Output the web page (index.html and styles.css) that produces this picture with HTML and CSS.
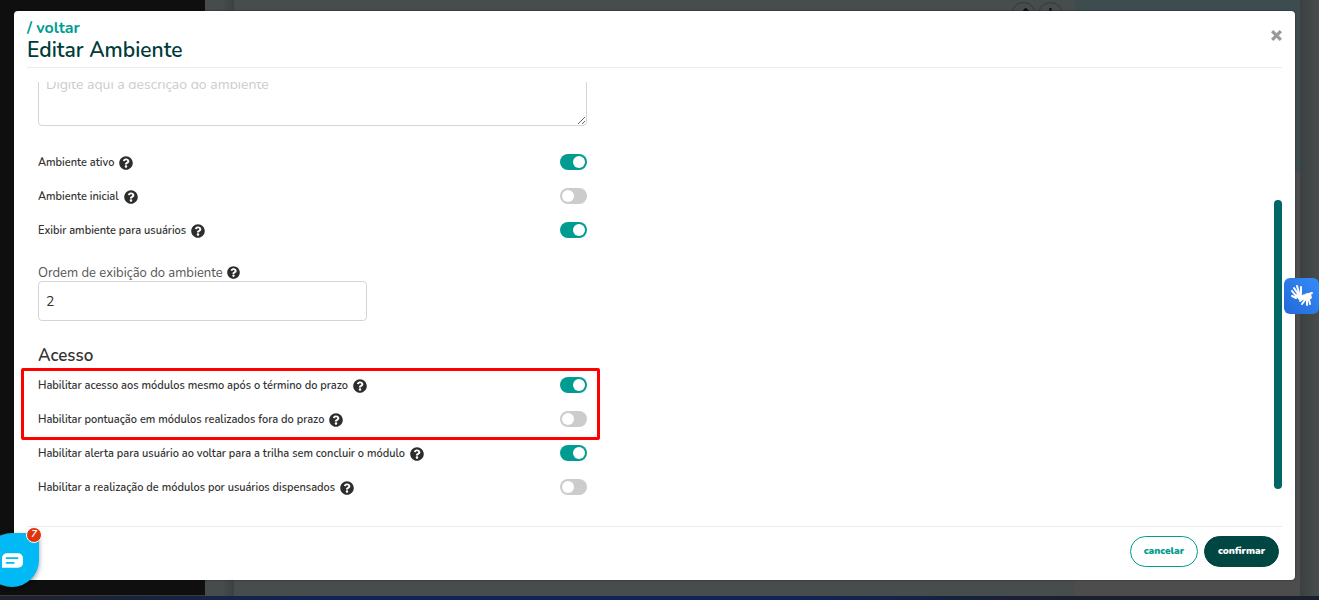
FILE: index.html
```html
<!DOCTYPE html>
<html lang="pt-BR">
<head>
    <meta charset="UTF-8">
    <meta name="viewport" content="width=device-width, initial-scale=1.0">
    <title>Editar Ambiente</title>
    <link rel="stylesheet" href="styles.css">
</head>
<body>
    <svg class="sprite" aria-hidden="true">
        <symbol id="help" viewBox="0 0 512 512">
            <path d="M504 256c0 137-111 248-248 248S8 393 8 256 119 8 256 8s248 111 248 248zM262.700 90c-54.500 0-89.300 23-116.500 63.800-3.500 5.300-2.400 12.400 2.700 16.300l34.700 26.300c5.200 3.900 12.600 3 16.700-2.100 17.900-22.700 30.100-35.800 57.300-35.800 20.400 0 45.700 13.100 45.700 33 0 15-12.400 22.700-32.500 34C247.100 238.500 216 254.900 216 296v4c0 6.600 5.400 12 12 12h56c6.600 0 12-5.400 12-12v-1.300c0-28.500 83.200-29.600 83.200-106.700 0-58-60.200-102-116.500-102zM256 338c-25.400 0-46 20.600-46 46s20.600 46 46 46 46-20.600 46-46-20.600-46-46-46z"/>
        </symbol>
    </svg>

    <div class="page">
        <div class="sidebar"></div>
        <div class="gutter"></div>
        <div class="content">
            <div class="tools">
                <span class="tool">
                    <svg viewBox="0 0 12 12"><path d="M2 10l1-3 5-6 2 2-5 6z"/></svg>
                </span>
                <span class="tool">
                    <svg viewBox="0 0 12 12"><path d="M6 0v10M2 6h8"/></svg>
                </span>
            </div>
        </div>
        <div class="panel"></div>
        <div class="edge"></div>
    </div>
    <div class="taskbar"></div>

    <div class="modal" role="dialog" aria-labelledby="title">
        <div class="modal-header">
            <div>
                <a class="back" href="#">/ voltar</a>
                <h1 id="title">Editar Ambiente</h1>
            </div>
            <button class="close" type="button" aria-label="Fechar">
                <svg viewBox="0 0 12 12"><path d="M2 2l8 8M10 2l-8 8"/></svg>
            </button>
        </div>

        <div class="modal-body">
            <form class="form" id="form">
                <textarea class="description" aria-label="Descrição" placeholder="Digite aqui a descrição do ambiente"></textarea>

                <div class="switches">
                    <div class="row">
                        <label for="ativo">Ambiente ativo</label>
                        <svg class="help"><use href="#help"/></svg>
                        <input class="switch" id="ativo" type="checkbox" checked>
                    </div>
                    <div class="row">
                        <label for="inicial">Ambiente inicial</label>
                        <svg class="help"><use href="#help"/></svg>
                        <input class="switch" id="inicial" type="checkbox">
                    </div>
                    <div class="row">
                        <label for="exibir">Exibir ambiente para usuários</label>
                        <svg class="help"><use href="#help"/></svg>
                        <input class="switch" id="exibir" type="checkbox" checked>
                    </div>
                </div>

                <div class="field">
                    <div class="field-label">
                        <label for="ordem">Ordem de exibição do ambiente</label>
                        <svg class="help small"><use href="#help"/></svg>
                    </div>
                    <input class="order" id="ordem" type="text" value="2">
                </div>

                <h2>Acesso</h2>
                <div class="highlight">
                    <div class="row">
                        <label for="prazo">Habilitar acesso aos módulos mesmo após o término do prazo</label>
                        <svg class="help"><use href="#help"/></svg>
                        <input class="switch" id="prazo" type="checkbox" checked>
                    </div>
                    <div class="row">
                        <label for="pontuacao">Habilitar pontuação em módulos realizados fora do prazo</label>
                        <svg class="help"><use href="#help"/></svg>
                        <input class="switch" id="pontuacao" type="checkbox">
                    </div>
                </div>
                <div class="row">
                    <label for="alerta">Habilitar alerta para usuário ao voltar para a trilha sem concluir o módulo</label>
                    <svg class="help"><use href="#help"/></svg>
                    <input class="switch" id="alerta" type="checkbox" checked>
                </div>
                <div class="row">
                    <label for="dispensados">Habilitar a realização de módulos por usuários dispensados</label>
                    <svg class="help"><use href="#help"/></svg>
                    <input class="switch" id="dispensados" type="checkbox">
                </div>
            </form>
            <div class="scrollbar"><div class="thumb"></div></div>
        </div>

        <div class="modal-footer">
            <button class="btn cancel" type="button">cancelar</button>
            <button class="btn confirm" type="submit" form="form">confirmar</button>
        </div>
    </div>

    <button class="chat" type="button" aria-label="Chat">
        <svg viewBox="0 0 22 16">
            <path class="bubble" d="M5 0h12a5 5 0 0 1 5 5v5a5 5 0 0 1-5 5H0V5a5 5 0 0 1 5-5z"/>
            <path class="lines" d="M4 5h13M4 10h9"/>
        </svg>
        <span class="badge">7</span>
    </button>

    <button class="libras" type="button" aria-label="Libras">
        <svg viewBox="0 0 24 24">
            <path class="finger" d="M6 12L2 7M8 10L4 4M9 9L7 2M11 9V3M6 14l-4-2"/>
            <path class="palm" d="M5 11l6-3 1 3 2-1-3 4 1 3-3-1z"/>
            <path class="palm" d="M13 11l4-2 4 1 1 4-4 3-4-1-2-2z"/>
            <path class="finger" d="M13 15l-3 2M15 16l-3 4M17 17v4M19 16l1 4M19 10l3-1M14 12l-3 2"/>
        </svg>
    </button>
</body>
</html>
```
FILE: styles.css
```css
* {
    box-sizing: border-box;
}
body {
    margin: 0;
    height: 100vh;
    display: flex;
    flex-direction: column;
    overflow: hidden;
    font-family: Nunito, Lato, sans-serif;
    font-size: 11px;
    color: #333;
    background: #101010;
}
button, input, textarea {
    font-family: inherit;
}
.sprite {
    display: none;
}
.page {
    flex: 1;
    display: flex;
}
.sidebar {
    width: 205px;
    background: #0f0f0f;
    border-bottom: 1px solid #3a3a3a;
}
.gutter {
    width: 29px;
    background: linear-gradient(90deg, #464b4b 60%, #3b4040);
}
.content {
    flex: 1;
    background: #474c4c;
}
.tools {
    display: flex;
    justify-content: flex-end;
    gap: 2px;
    padding: 2px 12px;
}
.tool {
    width: 25px;
    height: 25px;
    padding: 5px;
    border: 1px solid #343838;
    border-radius: 50%;
}
.tool svg {
    display: block;
    fill: none;
    stroke: #111;
    stroke-width: 2;
}
.panel {
    width: 225px;
    background: linear-gradient(#3c4c4f 172px, #4d4d4d 172px);
}
.edge {
    width: 19px;
    background: linear-gradient(90deg, #3b4040, #474c4c);
}
.taskbar {
    height: 4px;
    background: linear-gradient(90deg, #20222b, #102458 25%, #102458 60%, #1b2030 80%);
}

.modal {
    position: absolute;
    inset: 11px 24px 20px 14px;
    display: flex;
    flex-direction: column;
    padding: 0 13px;
    background: #fff;
    border-radius: 4px;
    box-shadow: 0 0 2px rgba(0,0,0,0.5);
}
.modal-header {
    display: flex;
    justify-content: space-between;
    align-items: flex-start;
    height: 57px;
    padding-top: 7px;
    border-bottom: 1px solid #ebebeb;
}
.back {
    display: block;
    font-size: 16px;
    line-height: 20px;
    font-weight: bold;
    color: #009c92;
    text-decoration: none;
}
h1 {
    margin: 0;
    font-size: 21px;
    line-height: 24px;
    font-weight: 600;
    color: #003b39;
}
.close {
    margin-top: 11px;
    padding: 0;
    border: none;
    background: none;
}
.close svg {
    display: block;
    width: 13px;
    height: 13px;
    margin-right: -1px;
    stroke: #999;
    stroke-width: 3;
}
.modal-body {
    flex: 1;
    min-height: 0;
    display: flex;
    justify-content: space-between;
    margin: 14px 0 0 -8px;
    padding-left: 8px;
    overflow: hidden;
}
.form {
    flex: 0 0 45%;
    padding: 0 5px 0 11px;
    margin-top: -16px;
}
.description {
    display: block;
    width: 100%;
    height: 60px;
    padding: 8px 7px;
    font-size: 14px;
    line-height: 20px;
    border: 1px solid #d5d5d5;
    border-radius: 4px;
}
.description::placeholder {
    color: #ccc;
}
.switches {
    margin-top: 19px;
}
.row {
    display: flex;
    align-items: center;
    height: 34px;
    gap: 5px;
    font-weight: 600;
}
.help {
    width: 14px;
    height: 14px;
    margin-top: 2px;
    fill: #2d2d2d;
}
.help.small {
    width: 13px;
    height: 13px;
    margin: 0;
}
.switch {
    appearance: none;
    width: 27px;
    height: 16px;
    margin: 0 0 0 auto;
    padding: 2px;
    border-radius: 8px;
    background: #ccc;
}
.switch::before {
    content: "";
    display: block;
    width: 12px;
    height: 12px;
    border-radius: 50%;
    background: #fff;
}
.switch:checked {
    background: #009c92;
}
.switch:checked::before {
    margin-left: auto;
}
.field {
    margin-top: 17px;
}
.field-label {
    display: flex;
    align-items: center;
    gap: 4px;
    height: 17px;
    font-size: 13px;
    color: #555;
}
.order {
    display: block;
    width: 60%;
    height: 40px;
    padding: 0 7px;
    font-size: 14px;
    color: #333;
    border: 1px solid #d5d5d5;
    border-radius: 4px;
}
h2 {
    margin: 24px 0 2px;
    font-size: 17px;
    line-height: 21px;
    font-weight: 600;
}
.highlight {
    position: relative;
}
.highlight::after {
    content: "";
    position: absolute;
    inset: 0 -13px -4px -17px;
    border: 3px solid #f00;
    border-radius: 2px;
    pointer-events: none;
}
.scrollbar {
    width: 8px;
    padding-top: 118px;
}
.thumb {
    height: 289px;
    border-radius: 4px;
    background: #006666;
}
.modal-footer {
    display: flex;
    justify-content: flex-end;
    gap: 6px;
    height: 54px;
    padding: 9px 3px 0;
    border-top: 1px solid #ebebeb;
}
.btn {
    height: 31px;
    padding: 0 13px 2px;
    font-size: 10px;
    font-weight: 900;
    border: 1px solid #009c92;
    border-radius: 16px;
}
.cancel {
    color: #009c92;
    background: #fff;
}
.confirm {
    color: #fff;
    background: #004642;
    border-color: #004642;
}

.chat {
    position: absolute;
    left: -15px;
    bottom: 13px;
    width: 54px;
    height: 54px;
    padding: 2px 0 0 17px;
    border: none;
    border-radius: 50% 0 50% 50%;
    background: #00b9f5;
    box-shadow: 0 2px 5px rgba(0,0,0,0.4);
}
.chat svg {
    display: block;
    width: 21px;
    height: 16px;
}
.bubble {
    fill: #fff;
}
.lines {
    fill: none;
    stroke: #00b9f5;
    stroke-width: 2;
}
.badge {
    position: absolute;
    top: -6px;
    right: -3px;
    width: 16px;
    height: 16px;
    border: 1px solid #fff;
    border-radius: 50%;
    background: #e0340b;
    color: #fff;
    font-size: 10px;
    line-height: 13px;
    font-weight: bold;
    font-style: italic;
}
.libras {
    position: absolute;
    right: 0;
    top: 278px;
    width: 35px;
    height: 36px;
    padding: 6px;
    border: none;
    border-radius: 6px;
    background: linear-gradient(45deg, #2369d8, #358bf8);
}
.libras svg {
    display: block;
    width: 24px;
    height: 24px;
}
.palm {
    fill: #fff;
}
.finger {
    fill: none;
    stroke: #fff;
    stroke-width: 2;
    stroke-linecap: round;
}
```
